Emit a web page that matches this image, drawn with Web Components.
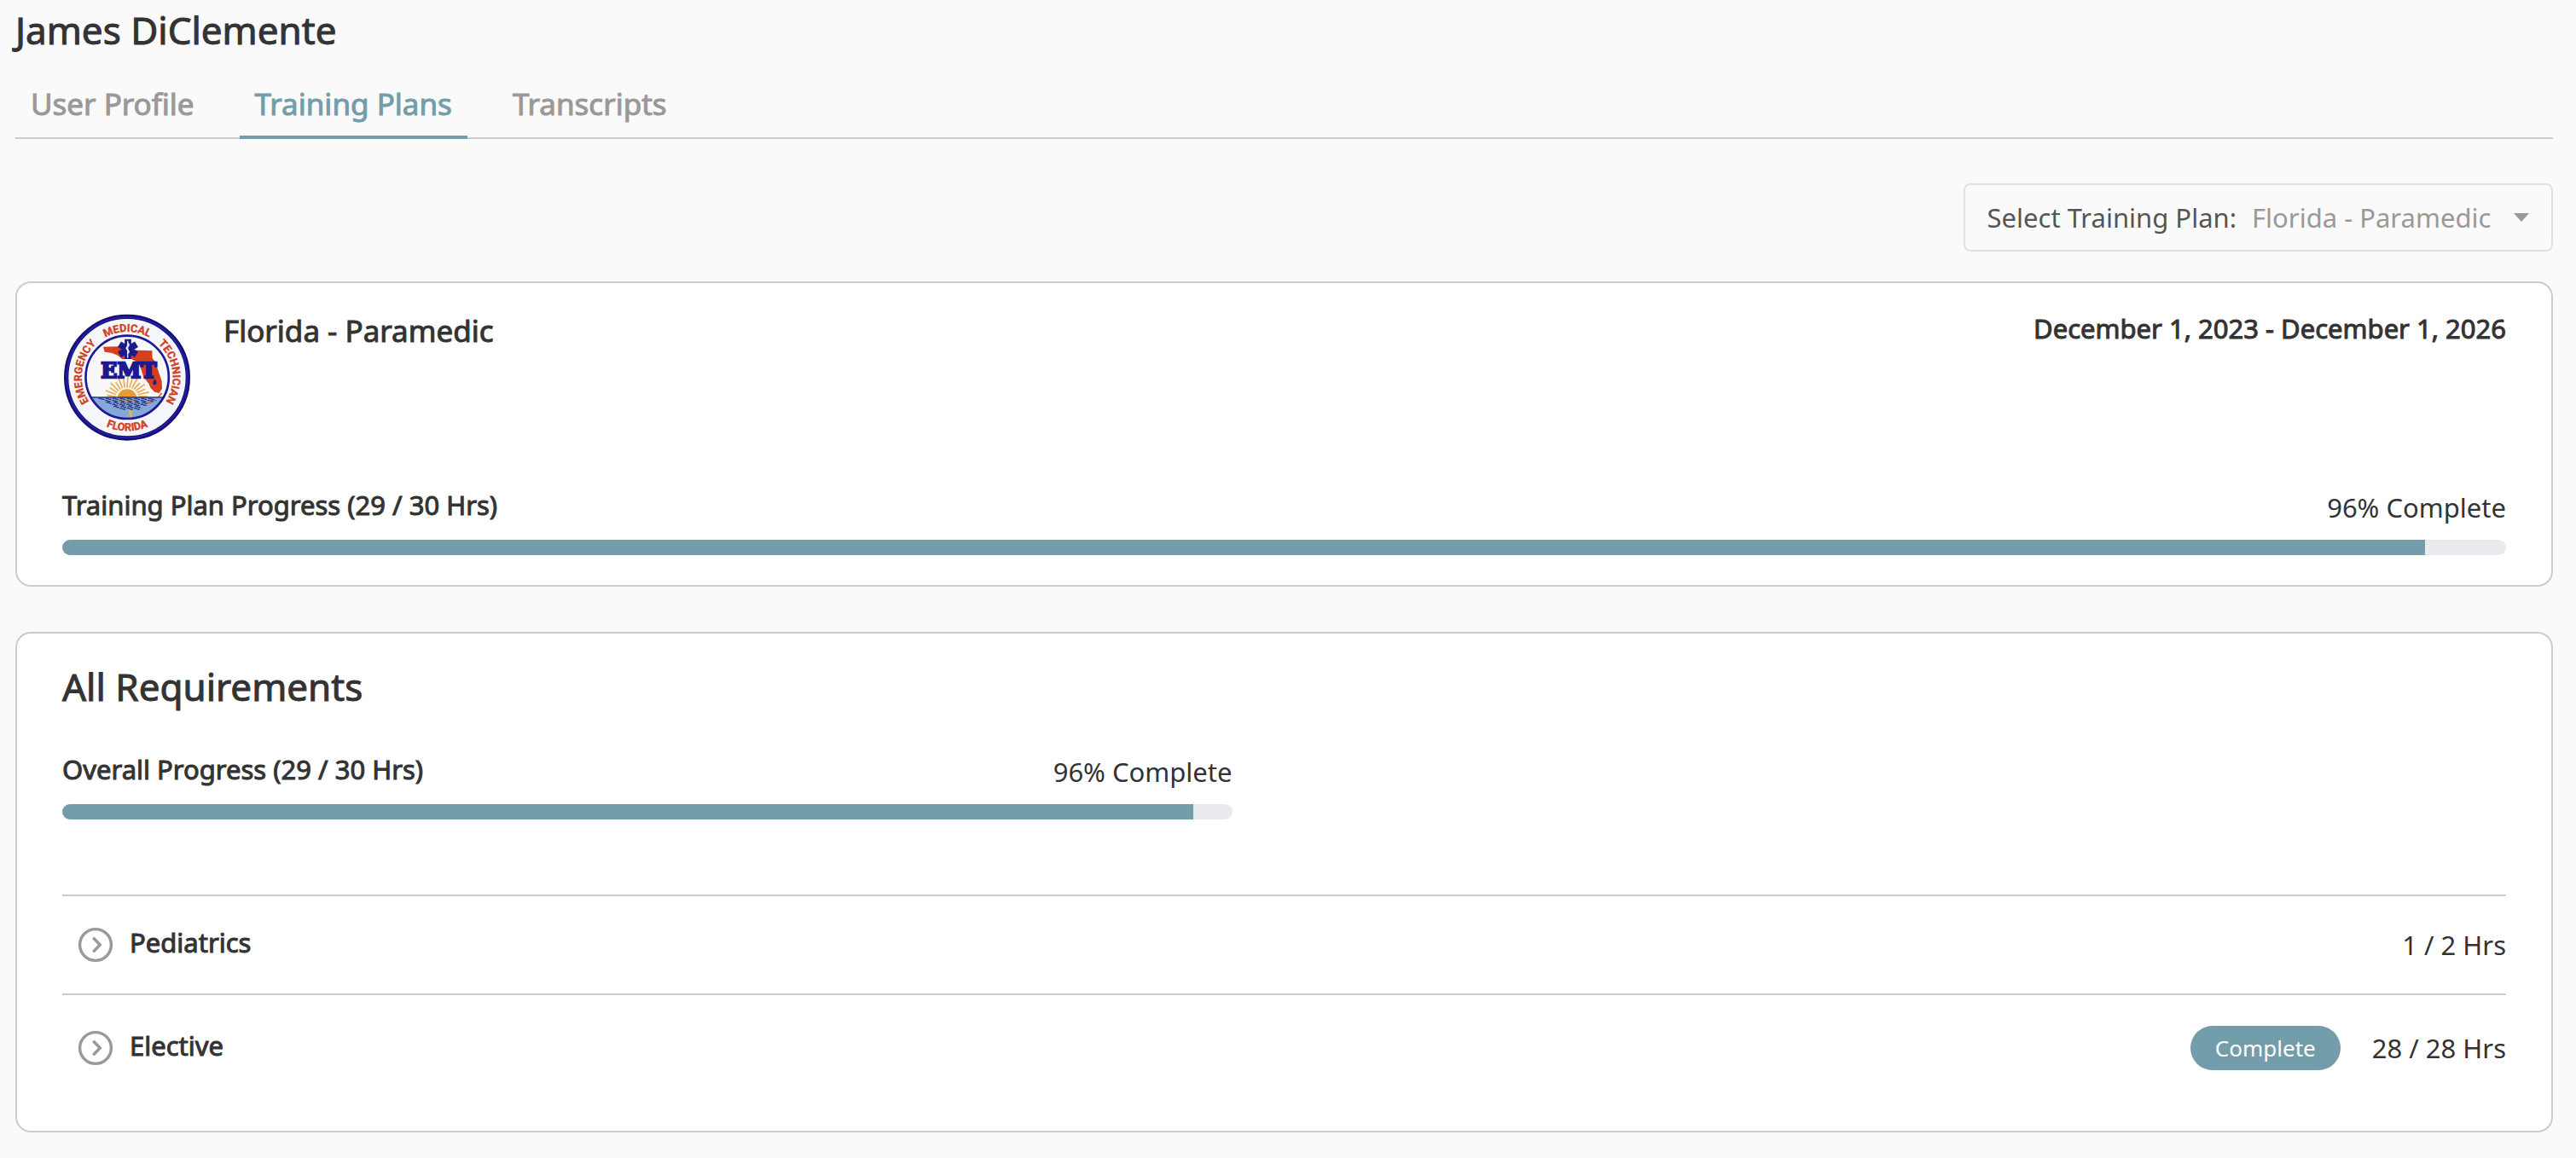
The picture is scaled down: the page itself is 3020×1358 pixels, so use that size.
<!DOCTYPE html>
<html lang="en">
<head>
<meta charset="utf-8">
<meta name="viewport" content="width=device-width, initial-scale=1">
<title>Training Plans</title>
<style>
    :root {
        --accent: #739dab;
        --ink: #333;
        --muted: #999;
        --line: #ccc;
        --track: #eaebef;
    }

    body {
        margin: 0;
        background: #fafafa;
        color: var(--ink);
        font: 31px/44px "Noto Sans", sans-serif;
    }
</style>
</head>
<body>
<training-page></training-page>

<script>
// Medium weight look on top of the regular face
const heavy = `
    font-weight: 400;
    -webkit-text-stroke: 1px currentColor;
`;

class TabBar extends HTMLElement {
    constructor() {
        super();
        this.attachShadow({ mode: "open" });
    }

    connectedCallback() {
        const active = this.getAttribute("active");
        const tabs = this.getAttribute("tabs").split(",");
        this.shadowRoot.innerHTML = `
            <style>
                :host { display: block; }
                nav {
                    display: flex;
                    gap: 35px;
                    border-bottom: 2px solid var(--line);
                }
                a {
                    ${heavy}
                    padding: 0 18px 2px;
                    margin-bottom: -2px;
                    border-bottom: 4px solid transparent;
                    color: var(--muted);
                    font-size: 35px;
                    line-height: 70px;
                    text-decoration: none;
                }
                a[aria-current] {
                    color: var(--accent);
                    border-color: var(--accent);
                }
            </style>
            <nav>
                ${tabs.map((t) => `<a href="#"${t === active ? ' aria-current="page"' : ""}>${t}</a>`).join("")}
            </nav>
        `;
    }
}

class PlanSelect extends HTMLElement {
    constructor() {
        super();
        this.attachShadow({ mode: "open" });
        this.shadowRoot.innerHTML = `
            <style>
                :host {
                    display: flex;
                    border: 2px solid #dee2e6;
                    border-radius: 8px;
                    padding: 0 26px;
                    line-height: 76px;
                }
                label { color: #555; margin-right: 18px; }
                .field { display: grid; align-items: center; }
                .field > * { grid-area: 1 / 1; }
                select {
                    appearance: none;
                    border: 0;
                    margin: 0;
                    padding: 0 44px 0 0;
                    background: none;
                    color: var(--muted);
                    font: inherit;
                    height: 76px;
                }
                svg { justify-self: end; pointer-events: none; }
            </style>
            <label for="plan">Select Training Plan:</label>
            <span class="field">
                <select id="plan"><option>Florida - Paramedic</option></select>
                <svg width="18" height="10" viewBox="0 0 18 10"><path d="M0 0h18l-9 10z" fill="#999"/></svg>
            </span>
        `;
    }
}

class PanelCard extends HTMLElement {
    constructor() {
        super();
        this.attachShadow({ mode: "open" });
        this.shadowRoot.innerHTML = `
            <style>
                :host {
                    display: block;
                    background: #fff;
                    border: 2px solid var(--line);
                    border-radius: 18px;
                    padding: 36px 53px 35px;
                }
            </style>
            <slot></slot>
        `;
    }
}

class ProgressMeter extends HTMLElement {
    constructor() {
        super();
        this.attachShadow({ mode: "open" });
    }

    connectedCallback() {
        const done = Number(this.getAttribute("done"));
        const total = Number(this.getAttribute("total"));
        const percent = (done / total) * 100;
        this.shadowRoot.innerHTML = `
            <style>
                :host { display: block; }
                .caption {
                    display: flex;
                    justify-content: space-between;
                    align-items: flex-start;
                    margin-bottom: 16px;
                }
                .name { ${heavy} line-height: 38px; }
                .track {
                    height: 18px;
                    border-radius: 9px;
                    overflow: hidden;
                    background: var(--track);
                }
                .fill {
                    height: 100%;
                    width: ${percent}%;
                    background: var(--accent);
                }
            </style>
            <div class="caption">
                <span class="name" id="name"><slot></slot> (${done} / ${total} Hrs)</span>
                <span>${Math.floor(percent)}% Complete</span>
            </div>
            <div class="track" role="progressbar" aria-labelledby="name" aria-valuenow="${Math.floor(percent)}">
                <div class="fill"></div>
            </div>
        `;
    }
}

class RequirementRow extends HTMLElement {
    constructor() {
        super();
        this.attachShadow({ mode: "open" });
    }

    connectedCallback() {
        const complete = this.hasAttribute("complete");
        this.shadowRoot.innerHTML = `
            <style>
                :host {
                    display: flex;
                    align-items: center;
                    justify-content: space-between;
                    border-top: 2px solid var(--line);
                    padding: 36px 0;
                }
                button {
                    display: flex;
                    gap: 19px;
                    border: 0;
                    margin: 0;
                    padding: 0 0 0 18px;
                    background: none;
                    color: inherit;
                    font: inherit;
                    line-height: 36px;
                    cursor: pointer;
                }
                .name { ${heavy} }
                .status { display: flex; align-items: center; gap: 37px; line-height: 42px; }
                .badge {
                    background: var(--accent);
                    color: #fff;
                    border-radius: 26px;
                    padding: 0 29px;
                    font-size: 26px;
                    line-height: 52px;
                }
            </style>
            <button type="button" aria-expanded="false">
                <svg width="42" height="42" viewBox="0 0 42 42" fill="none" stroke="#999" stroke-width="3.4">
                    <circle cx="21" cy="21" r="18.4"/>
                    <path d="M18.3 12.8l8 8.2-8 8.2"/>
                </svg>
                <span class="name"><slot></slot></span>
            </button>
            <span class="status">
                ${complete ? '<span class="badge">Complete</span>' : ""}
                <span>${this.getAttribute("hours")} Hrs</span>
            </span>
        `;
    }
}

class EmtPatch extends HTMLElement {
    constructor() {
        super();
        this.attachShadow({ mode: "open" });
    }

    // Rays fan out over the top half of the sun
    rays() {
        let d = "";
        for (let i = 0; i <= 14; i++) {
            const a = Math.PI * (1.03 + (i * 0.94) / 14);
            const far = i % 2 ? 74 : 66;
            const x1 = 267 + Math.cos(a) * 40;
            const y1 = 334 + Math.sin(a) * 36;
            const x2 = 267 + Math.cos(a + 0.04) * far * 1.08;
            const y2 = 334 + Math.sin(a + 0.04) * far;
            d += `M${x1.toFixed(1)} ${y1.toFixed(1)}L${x2.toFixed(1)} ${y2.toFixed(1)}`;
        }
        return d;
    }

    // Short stitched waves, thinner towards the bottom
    waves() {
        let d = "";
        for (let row = 0; row < 6; row++) {
            const half = 100 - row * 13;
            for (let x = 267 - half + (row % 2) * 9; x < 267 + half; x += 25) {
                d += `M${x} ${338 + row * 7}q5 -4 10 0t10 1`;
            }
        }
        return d;
    }

    connectedCallback() {
        this.shadowRoot.innerHTML = `
            <style>
                :host { display: block; }
                svg { display: block; }
                .rim { font: bold 38px Roboto, sans-serif; fill: #d2401f; stroke: #d2401f; stroke-width: 1; }
                .emt { font: bold 75px "DejaVu Serif", serif; fill: #1d1a8c; stroke: #1d1a8c; stroke-width: 7; }
            </style>
            <svg width="152" height="150" viewBox="39 39 456 450" role="img" aria-label="Florida EMT patch">
                <defs>
                    <clipPath id="inner"><circle cx="267.5" cy="262" r="146"/></clipPath>
                    <path id="over" d="M267 422A160 160 0 1 1 268 422"/>
                    <path id="under" d="M267 75A188 188 0 1 0 268 75"/>
                </defs>
                <circle cx="267" cy="263" r="214" fill="#f4f6f9" stroke="#14106f" stroke-width="16"/>
                <circle cx="267" cy="263" r="212" fill="none" stroke="#251bae" stroke-width="6"/>
                <g clip-path="url(#inner)">
                    <rect x="110" y="110" width="320" height="310" fill="#f8f8f8"/>
                    <path d="M183 155L240 154 250 166 355 169 356 196 366 207 376 238 389 276 390 302 380 318 364 314 349 299 343 284 325 262 313 224 298 206 278 196 250 199 234 185 214 177 188 173z" fill="#d2401f"/>
                    <path d="M389 318l-14 16-20 10" fill="none" stroke="#d2401f" stroke-width="4"/>
                    <path d="M364 268q10 10 4 20-10 4-10-5z" fill="#1d1a8c"/>
                    <path d="${this.rays()}" stroke="#e9ac48" stroke-width="5"/>
                    <path d="M233 336a34 32 0 0 1 68 0z" fill="#e79b35"/>
                    <path d="M110 332h320v90H110z" fill="#86a8d8"/>
                    <path d="M110 333h320" stroke="#28348a" stroke-width="4"/>
                    <path d="M238 338h60l-8 12h-44z" fill="#c6a461"/>
                    <path d="M272 374l14 8-2 26h-8z" fill="#d4b36a"/>
                    <path d="${this.waves()}" fill="none" stroke="#28397f" stroke-width="4"/>
                    <path d="M342 344h30M336 352h16" stroke="#d2401f" stroke-width="3"/>
                </g>
                <circle cx="267.5" cy="262" r="146" fill="none" stroke="#201996" stroke-width="8"/>
                <g stroke="#1d1a8c" stroke-width="23">
                    <path d="M270 128v70M240 146l60 36M300 146l-60 36"/>
                </g>
                <path d="M269 134v60" stroke="#dfe3f2" stroke-width="4"/>
                <path d="M269 142q8 6 0 12t0 12 0 12" fill="none" stroke="#f4f6f9" stroke-width="5"/>
                <text class="emt" x="273" y="265" text-anchor="middle">EMT</text>
                <g class="rim" text-anchor="middle">
                    <text><textPath href="#over" startOffset="27%">EMERGENCY</textPath></text>
                    <text><textPath href="#over" startOffset="50%">MEDICAL</textPath></text>
                    <text><textPath href="#over" startOffset="73%">TECHNICIAN</textPath></text>
                    <text><textPath href="#under" startOffset="50%">FLORIDA</textPath></text>
                </g>
            </svg>
        `;
    }
}

class TrainingPage extends HTMLElement {
    constructor() {
        super();
        this.attachShadow({ mode: "open" });
    }

    connectedCallback() {
        this.shadowRoot.innerHTML = `
            <style>
                :host { display: block; padding: 5px 27px 30px 18px; }
                h1, h2, h3, p { ${heavy} margin: 0; }
                h1 { font-size: 44px; line-height: 60px; }
                h2 { font-size: 44px; line-height: 52px; }
                h3 { font-size: 35px; line-height: 40px; }
                p { line-height: 34px; }
                tab-bar { margin-top: 22px; }
                .filter { display: flex; justify-content: flex-end; margin: 52px 0 35px; }
                .plan { display: flex; gap: 37px; margin-bottom: 55px; }
                .plan p { margin-left: auto; }
                panel-card + panel-card { margin-top: 53px; }
                .overall {
                    display: grid;
                    grid-template-columns: 1fr 1fr;
                    column-gap: 122px;
                    margin: 52px 0 88px;
                }
            </style>
            <h1>James DiClemente</h1>
            <tab-bar tabs="User Profile,Training Plans,Transcripts" active="Training Plans"></tab-bar>
            <div class="filter"><plan-select></plan-select></div>

            <panel-card>
                <div class="plan">
                    <emt-patch></emt-patch>
                    <h3>Florida - Paramedic</h3>
                    <p>December 1, 2023 - December 1, 2026</p>
                </div>
                <progress-meter done="29" total="30">Training Plan Progress</progress-meter>
            </panel-card>

            <panel-card>
                <h2>All Requirements</h2>
                <div class="overall">
                    <progress-meter done="29" total="30">Overall Progress</progress-meter>
                </div>
                <requirement-row hours="1 / 2">Pediatrics</requirement-row>
                <requirement-row hours="28 / 28" complete>Elective</requirement-row>
            </panel-card>
        `;
    }
}

customElements.define("tab-bar", TabBar);
customElements.define("plan-select", PlanSelect);
customElements.define("panel-card", PanelCard);
customElements.define("progress-meter", ProgressMeter);
customElements.define("requirement-row", RequirementRow);
customElements.define("emt-patch", EmtPatch);
customElements.define("training-page", TrainingPage);
</script>
</body>
</html>
